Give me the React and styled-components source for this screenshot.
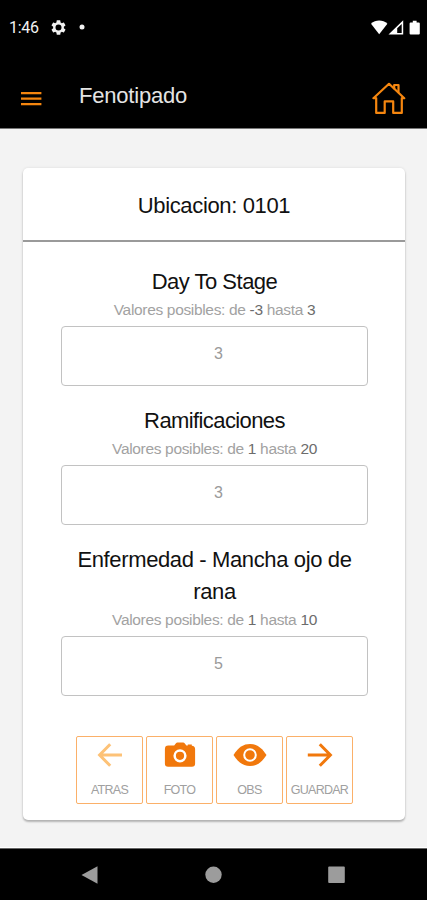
import React from "react";
import styled, { createGlobalStyle } from "styled-components";

// ------------ Variables -------------------
const color_orange = "#f1780c";
const color_orange_light = "#f5860f";
const color_black = "#000";
const color_background = "#f3f3f3";
const font_main = '"Liberation Sans", Arial, sans-serif';
// ----- end of Variables -------------------

// --------------- Styles -------------------
const GlobalStyle = createGlobalStyle`
  *, *::before, *::after {
    box-sizing: border-box;
  }
  body {
    margin: 0;
    background: ${color_background};
    font-family: ${font_main};
  }
  svg {
    display: block;
  }
`;

const Screen = styled.div`
  display: flex;
  flex-direction: column;
  width: 427px;
  height: 900px;
  background: ${color_background};
`;

const StatusBar = styled.div`
  display: flex;
  align-items: center;
  flex: none;
  height: 56px;
  padding: 0 7px 2px 9px;
  background: ${color_black};
  color: #f2f2f2;
`;

const Clock = styled.span`
  width: 42px;
  padding-top: 1px;
  font-family: Roboto, sans-serif;
  font-size: 16px;
  letter-spacing: -0.25px;
`;

const StatusIcons = styled.div`
  margin-left: auto;
`;

const AppBar = styled.header`
  display: flex;
  flex: none;
  height: 73px;
  padding: 26px 21px 0;
  background: ${color_black};
  border-bottom: 1px solid #777;
`;

const Title = styled.h1`
  flex: 1;
  margin: 2px 0 0 37px;
  color: #e4e4e4;
  font-size: 22px;
  font-weight: 400;
  line-height: 24px;
  letter-spacing: -0.2px;
`;

const IconButton = styled.button`
  align-self: flex-start;
  padding: 0;
  border: 0;
  background: none;
  color: ${color_orange_light};
  margin: ${(props) => props.$margin};
`;

const Page = styled.main`
  flex: 1;
  padding: 39px 22px 0 23px;
  border-bottom: 1px solid #fff;
`;

const Card = styled.section`
  height: 652px;
  background: #fff;
  border-radius: 5px;
  box-shadow: 0 2px 2px rgba(0, 0, 0, 0.24), 0 0 3px rgba(0, 0, 0, 0.1);
`;

const CardHeader = styled.div`
  height: 74px;
  padding-top: 22px;
  border-bottom: 2px solid #9a9a9a;
`;

const Heading = styled.h2`
  margin: 0;
  color: #111;
  font-size: 22px;
  font-weight: 400;
  line-height: 32px;
  letter-spacing: ${(props) => props.$spacing || "-0.35px"};
  text-align: center;
`;

const Form = styled.div`
  padding: 23.5px 37px 0 38px;
`;

const Field = styled.div`
  margin-bottom: 19.3px;
`;

const Hint = styled.p`
  margin: 0 0 5px;
  color: #a2a2a2;
  font-size: 15.5px;
  line-height: 23px;
  letter-spacing: -0.33px;
  text-align: center;

  & span {
    color: #6c6c6c;
  }
`;

const Input = styled.input`
  display: block;
  width: 307px;
  height: 60px;
  padding: 0 0 4px 8px;
  border: 1px solid #c2c2c2;
  border-radius: 4px;
  outline: 0;
  background: #fff;
  color: #9a9a9a;
  font-family: ${font_main};
  font-size: 16px;
  text-align: center;
`;

const Actions = styled.div`
  display: flex;
  gap: 3px;
  padding: 20.6px 0 0 15px;
`;

const ActionButton = styled.button`
  display: flex;
  flex-direction: column;
  align-items: center;
  width: 67px;
  height: 68px;
  padding: 4px 0 0;
  border: 1px solid #fbb069;
  border-radius: 2px;
  background: #fff;
  color: ${(props) => (props.$faded ? "#fdc277" : color_orange)};
`;

const ActionLabel = styled.span`
  margin-top: 16px;
  color: #a0a0a0;
  font-family: ${font_main};
  font-size: 12.5px;
  line-height: 14px;
  letter-spacing: ${(props) => props.$spacing};
  white-space: nowrap;
`;

const SystemBar = styled.nav`
  display: flex;
  flex: none;
  justify-content: space-between;
  height: 52px;
  padding: 17px 82px 0 81px;
  background: ${color_black};
  border-top: 1px solid #666;
`;
// -------- end of Styles -------------------

const fields = [
  { name: "Day To Stage", min: "-3", max: "3", value: "3", spacing: "-0.5px" },
  { name: "Ramificaciones", min: "1", max: "20", value: "3", spacing: "-0.6px" },
  { name: "Enfermedad - Mancha ojo de rana", min: "1", max: "10", value: "5", spacing: "-0.37px" },
];

const GearIcon = () => (
  <svg width="15" height="15" viewBox="2 2 20 20" fill="#f2f2f2">
    <path d="M19.14 12.94c.04-.3.06-.61.06-.94s-.02-.64-.07-.94l2.03-1.58a.49.49 0 0 0 .12-.61l-1.92-3.32a.49.49 0 0 0-.59-.22l-2.39.96a7 7 0 0 0-1.62-.94l-.36-2.54A.48.48 0 0 0 13.92 2.4h-3.84c-.24 0-.43.17-.47.41l-.36 2.54c-.59.24-1.13.57-1.62.94l-2.39-.96a.48.48 0 0 0-.59.22L2.74 8.87a.48.48 0 0 0 .12.61l2.03 1.58a7 7 0 0 0 0 1.88l-2.03 1.58a.49.49 0 0 0-.12.61l1.92 3.32c.12.22.37.29.59.22l2.39-.96c.5.38 1.03.7 1.62.94l.36 2.54c.05.24.24.41.48.41h3.84c.24 0 .44-.17.47-.41l.36-2.54a7 7 0 0 0 1.62-.94l2.39.96c.22.08.47 0 .59-.22l1.92-3.32a.48.48 0 0 0-.12-.61zM12 16a4 4 0 1 1 0-8 4 4 0 0 1 0 8z" />
  </svg>
);

const DotIcon = () => (
  <svg width="31" height="6" viewBox="0 0 31 6" fill="#f2f2f2">
    <circle cx="16" cy="3" r="2.5" />
  </svg>
);

const SignalIcons = () => (
  <svg width="49" height="15" viewBox="0 0 49 15" fill="#fff">
    <path d="M0 3.8C4.6-.6 11.8-.6 16.4 3.8L8.2 14.3z" />
    <path fillRule="evenodd" d="M17.5 14.5 32.2.2v14.3zM26.200 8.300v4.700h4.500V3.900z" />
    <path d="M39.6 2.4h2.2V.7h3.8v1.7h2.2q1 0 1 1v10q0 1-1 1h-8.2q-1 0-1-1v-10q0-1 1-1z" />
  </svg>
);

const MenuIcon = () => (
  <svg width="21" height="14" viewBox="0 0 21 14" fill="none" stroke="currentColor" strokeWidth="2.2">
    <path d="M0 1.2h20.4M0 6.7h20.4M0 12.2h20.4" />
  </svg>
);

const HomeIcon = () => (
  <svg width="34" height="33" viewBox="0 0 34 33" fill="none" stroke="currentColor" strokeWidth="2.2" strokeLinejoin="round" strokeLinecap="round">
    <path d="M1.4 16.2 17 1.8l15.3 14.4h-2.500v14.700h-8.600V19.400h-8.500v11.500H4.200V16.200z" />
    <path d="M22.2 6.4V3h4.3v7.3" />
  </svg>
);

const ArrowIcon = ({ left }) => (
  <svg width="26" height="26" viewBox="0 0 26 26" fill="none" stroke="currentColor" strokeWidth="3">
    {left
      ? <path d="M25 14H3M13.200 3.200 2.600 14l10.600 10.800" />
      : <path d="M.8 14H23M12.800 3.200 23.400 14 12.800 24.800" />}
  </svg>
);

const CameraIcon = () => (
  <svg width="32" height="26" viewBox="0 0 32 26" fill="currentColor">
    <path fillRule="evenodd" d="M10.200 4.600 12 2.200q.5-.7 1.400-.7h5.800q.9 0 1.400.7l1.800 2.400h1.400V3.400h4v1.400q3.300.3 3.300 3.300v14.400q0 3.200-3.200 3.200H4.100Q.9 25.700.9 22.500V8q0-3.400 3.400-3.400zM16 8.200a6.600 6.600 0 1 0 0 13.200 6.600 6.600 0 0 0 0-13.200zm0 2.500a4.100 4.100 0 1 1 0 8.200 4.100 4.100 0 0 1 0-8.200z" />
  </svg>
);

const EyeIcon = () => (
  <svg width="34" height="26" viewBox="0 0 34 26">
    <path fill="currentColor" d="M.5 14C5.500 6.200 10.500 3 17 3s11.500 3.200 16.500 11C28.500 21.800 23.500 25 17 25S5.500 21.800.5 14z" />
    <circle cx="17" cy="14" r="5.8" fill="none" stroke="#fff" strokeWidth="2" />
  </svg>
);

const actions = [
  { label: "ATRAS", icon: <ArrowIcon left />, faded: true, spacing: "-0.7px" },
  { label: "FOTO", icon: <CameraIcon />, spacing: "-0.7px" },
  { label: "OBS", icon: <EyeIcon />, spacing: "-0.7px" },
  { label: "GUARDAR", icon: <ArrowIcon />, spacing: "-0.75px" },
];

const App = () => (
  <Screen>
    <GlobalStyle />

    <StatusBar>
      <Clock>1:46</Clock>
      <GearIcon />
      <DotIcon />
      <StatusIcons>
        <SignalIcons />
      </StatusIcons>
    </StatusBar>

    <AppBar>
      <IconButton $margin="10px 0 0" aria-label="Menu">
        <MenuIcon />
      </IconButton>
      <Title>Fenotipado</Title>
      <IconButton $margin="0" aria-label="Inicio">
        <HomeIcon />
      </IconButton>
    </AppBar>

    <Page>
      <Card>
        <CardHeader>
          <Heading>Ubicacion: 0101</Heading>
        </CardHeader>
        <Form>
          {fields.map((field) => (
            <Field key={field.name}>
              <Heading $spacing={field.spacing}>{field.name}</Heading>
              <Hint>
                Valores posibles: de <span>{field.min}</span> hasta <span>{field.max}</span>
              </Hint>
              <Input defaultValue={field.value} aria-label={field.name} />
            </Field>
          ))}
          <Actions>
            {actions.map((action) => (
              <ActionButton key={action.label} $faded={action.faded}>
                {action.icon}
                <ActionLabel $spacing={action.spacing}>{action.label}</ActionLabel>
              </ActionButton>
            ))}
          </Actions>
        </Form>
      </Card>
    </Page>

    <SystemBar>
      <svg width="17" height="18" viewBox="0 0 17 18" fill="#9c9c9c">
        <path d="M.5 9 16.5.2v17.6z" />
      </svg>
      <svg width="17" height="18" viewBox="0 0 17 18" fill="#9c9c9c">
        <circle cx="8.5" cy="8.8" r="8.2" />
      </svg>
      <svg width="17" height="18" viewBox="0 0 17 18" fill="#9c9c9c">
        <rect x=".2" y=".4" width="16.6" height="16.6" rx="1" />
      </svg>
    </SystemBar>
  </Screen>
);

export default App;
